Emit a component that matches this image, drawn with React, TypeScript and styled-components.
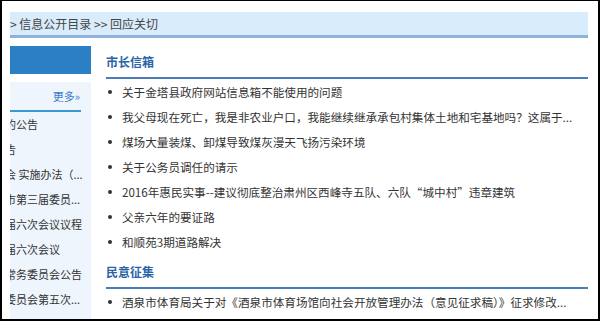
import * as React from "react";
import styled, { createGlobalStyle } from "styled-components";

const GlobalStyle = createGlobalStyle`
  html, body {
    margin: 0;
    padding: 0;
    background: #fff;
  }
  body {
    font-family: "Noto Sans CJK SC", "Microsoft YaHei", sans-serif;
  }
`;

const sideItems = [
  "的公告",
  "告",
  "会 实施办法（...",
  "市第三届委员...",
  "届六次会议议程",
  "届六次会议",
  "常务委员会公告",
  "委员会第五次...",
];

const mayorItems = [
  "关于金塔县政府网站信息箱不能使用的问题",
  "我父母现在死亡，我是非农业户口，我能继续继承承包村集体土地和宅基地吗？这属于...",
  "煤场大量装煤、卸煤导致煤灰漫天飞扬污染环境",
  "关于公务员调任的请示",
  "2016年惠民实事--建议彻底整治肃州区西峰寺五队、六队“城中村”违章建筑",
  "父亲六年的要证路",
  "和顺苑3期道路解决",
];

const opinionItems = [
  "酒泉市体育局关于对《酒泉市体育场馆向社会开放管理办法（意见征求稿）》征求修改...",
];

const Section = ({ title, items }: { title: string; items: string[] }) => (
  <>
    <SectionTitle>{title}</SectionTitle>
    <List>
      {items.map((item) => (
        <Item key={item}>
          <Bullet />
          <ItemText>{item}</ItemText>
        </Item>
      ))}
    </List>
  </>
);

const App = () => {
  return (
    <Frame>
      <GlobalStyle />
      <Breadcrumb>&gt; 信息公开目录 &gt;&gt; 回应关切</Breadcrumb>
      <Body>
        <Side>
          <SideHead />
          <SidePanel>
            <MoreRow>
              <More>更多»</More>
            </MoreRow>
            <SideList>
              {sideItems.map((item) => (
                <SideItem key={item}>{item}</SideItem>
              ))}
            </SideList>
          </SidePanel>
        </Side>
        <Main>
          <Section title="市长信箱" items={mayorItems} />
          <Section title="民意征集" items={opinionItems} />
        </Main>
      </Body>
    </Frame>
  );
};

const Frame = styled.div`
  box-sizing: border-box;
  width: 600px;
  height: 321px;
  border: 2px solid #000;
  border-top-width: 1px;
  padding: 11px 10px 0 8px;
  overflow: hidden;
  background: #fff;
`;

const Breadcrumb = styled.div`
  height: 23px;
  line-height: 23px;
  background: #d9ecfb;
  border-bottom: 3px solid #8eb2d8;
  font-size: 12px;
  color: #444;
  white-space: nowrap;
`;

const Body = styled.div`
  display: flex;
  gap: 15px;
  margin-top: 8px;
`;

const Side = styled.div`
  flex: none;
  width: 81px;
`;

const SideHead = styled.div`
  height: 28px;
  background: #2b7fc5;
`;

const SidePanel = styled.div`
  margin-top: 8px;
  height: 240px;
  background: #eef5fd;
  overflow: hidden;
`;

const MoreRow = styled.div`
  display: flex;
  justify-content: flex-end;
  align-items: center;
  width: 71px;
  height: 28px;
  border-bottom: 2px solid #3a98cc;
`;

const More = styled.span`
  font-size: 11px;
  color: #3b7cc6;
  padding-right: 1px;
`;

const SideList = styled.div`
  display: flex;
  flex-direction: column;
`;

const SideItem = styled.div`
  height: 25px;
  line-height: 25px;
  margin-left: -5px;
  font-size: 11px;
  color: #333;
  white-space: nowrap;
`;

const Main = styled.div`
  flex: 1;
  min-width: 0;
`;

const SectionTitle = styled.div`
  height: 31px;
  line-height: 31px;
  font-size: 12px;
  font-weight: bold;
  color: #2a64a8;
  border-bottom: 2px solid #4a7db8;
`;

const List = styled.div`
  display: flex;
  flex-direction: column;
  padding-bottom: 2px;
`;

const Item = styled.div`
  display: flex;
  align-items: center;
  height: 25px;
  font-size: 11.6px;
  color: #333;
  white-space: nowrap;
`;

const Bullet = styled.span`
  flex: none;
  width: 4px;
  height: 4px;
  margin: 0 10px 0 2px;
  border-radius: 50%;
  background: #333;
`;

const ItemText = styled.span`
  overflow: hidden;
`;

export default App;
